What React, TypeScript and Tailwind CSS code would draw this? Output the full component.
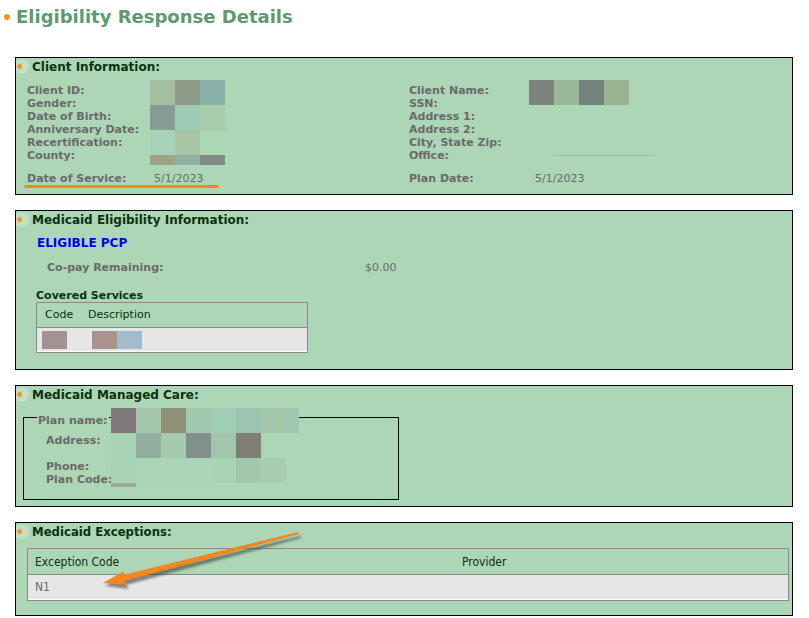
import React from 'react';

const PANEL = 'relative overflow-hidden border border-black bg-[#acd6b6]';

// Greyed-out (redacted) values are rendered as rows of 25px tiles
function Tiles({ rows }: { rows: { h?: number; cells: { c: string; w?: number }[] }[] }) {
  return (
    <div className="flex flex-col">
      {rows.map((r, i) => (
        <div key={i} className="flex">
          {r.cells.map((cell, j) => (
            <div key={j} style={{ background: cell.c, width: cell.w ?? 25, height: r.h ?? 25 }} />
          ))}
        </div>
      ))}
    </div>
  );
}

function PanelTitle({ children, condensed }: { children: React.ReactNode; condensed?: boolean }) {
  return (
    <>
      <span className="absolute left-[-2px] top-[1px] h-[15px] w-[15px] rounded-full bg-white/25" />
      <span className="absolute left-[1px] top-[6px] h-[5px] w-[5px] rounded-full bg-[#f7941d]" />
      <div
        className={
          'pl-[16px] pt-[1px] h-[18px] font-bold leading-[16px] text-[#0a330f] ' +
          (condensed ? "text-[13px] font-['DejaVu_Sans_Condensed',sans-serif]" : 'text-[12px]')
        }
      >
        {children}
      </div>
    </>
  );
}

const label = 'text-[11px] font-bold leading-[13px] text-[#6a6a6a] whitespace-nowrap';

function ClientInfo() {
  return (
    <div className={PANEL + ' h-[138px]'}>
      <PanelTitle>Client Information:</PanelTitle>
      <div className="flex pt-[8px]">
        <div className="flex w-[393px] pl-[11px]">
          <div className={label + ' w-[123px]'}>
            <div>Client ID:</div>
            <div>Gender:</div>
            <div>Date of Birth:</div>
            <div>Anniversary Date:</div>
            <div>Recertification:</div>
            <div>County:</div>
          </div>
          <div className="-mt-[4px]">
            <Tiles
              rows={[
                { cells: [{ c: '#a3bea0' }, { c: '#8d9c88' }, { c: '#89b1aa' }] },
                { cells: [{ c: '#869c94' }, { c: '#9ecdb5' }, { c: '#a8ccaa' }] },
                { cells: [{ c: '#a8d2b8' }, { c: '#a6c6a6' }, { c: '#acd7b5' }] },
                { h: 10, cells: [{ c: '#9da384' }, { c: '#8fb1a0' }, { c: '#7f8a86' }] },
              ]}
            />
          </div>
        </div>
        <div className="flex">
          <div className={label + ' w-[120px]'}>
            <div>Client Name:</div>
            <div>SSN:</div>
            <div>Address 1:</div>
            <div>Address 2:</div>
            <div>City, State Zip:</div>
            <div>Office:</div>
          </div>
          <div className="-mt-[4px] relative">
            <Tiles rows={[{ cells: [{ c: '#7a857c' }, { c: '#9ab797' }, { c: '#748379' }, { c: '#9ab493' }] }]} />
            <div className="mt-[50px] ml-[25px] h-px w-[100px] bg-[#9cc4a4]" />
          </div>
        </div>
      </div>
      <div className="mt-[7px] flex text-[11px] leading-[13px]">
        <div className="flex w-[393px] pl-[11px]">
          <div className={label + ' w-[127px]'}>Date of Service:</div>
          <div className="text-[#6a6a6a]">5/1/2023</div>
        </div>
        <div className="flex">
          <div className={label + ' w-[126px]'}>Plan Date:</div>
          <div className="text-[#6a6a6a]">5/1/2023</div>
        </div>
      </div>
      {/* highlight stroke under the service date */}
      <div className="absolute left-[8px] top-[127px] h-[3px] w-[195px] rounded-full bg-[#f7861b]" />
    </div>
  );
}

function EligibilityInfo() {
  return (
    <div className={PANEL + ' h-[160px]'}>
      <PanelTitle>Medicaid Eligibility Information:</PanelTitle>
      <div className="pl-[21px] pt-[7px] text-[12px] font-bold leading-[14px] text-[#0000f0]">ELIGIBLE PCP</div>
      <div className="mt-[11px] flex pl-[31px] text-[11px] leading-[13px]">
        <div className={label + ' w-[318px]'}>Co-pay Remaining:</div>
        <div className="text-[#6a6a6a]">$0.00</div>
      </div>
      <div className="mt-[15px] pl-[20px] text-[11px] font-bold leading-[13px] text-[#0a330f]">Covered Services</div>
      <div className="ml-[20px] w-[272px] border border-[#8a8a8a]">
        <div className="flex h-[25px] items-center border-b border-[#8a8a8a] pt-[1px] text-[11px] text-[#0a330f]">
          <span className="pl-[8px] w-[51px]">Code</span>
          <span>Description</span>
        </div>
        <div className="flex h-[24px] items-center bg-[#e6e6e6] border-b border-white">
          <div className="ml-[5px] h-[18px] w-[25px] bg-[#a39390]" />
          <div className="ml-[25px] h-[18px] w-[25px] bg-[#a9948c]" />
          <div className="h-[18px] w-[25px] bg-[#a3bccd]" />
        </div>
      </div>
    </div>
  );
}

function ManagedCare() {
  return (
    <div className={PANEL + ' h-[122px]'}>
      <PanelTitle>Medicaid Managed Care:</PanelTitle>
      {/* plan box: the legend row straddles the top border */}
      <div className="ml-[7px] mt-[13px] h-[83px] w-[376px] border border-black">
        <div className="-mt-[10px] flex">
          <div className={label + ' w-[87px] shrink-0'}>
            <div className="ml-[13px] mt-[6px] w-fit bg-[#acd6b6] px-[1px]">Plan name:</div>
            <div className="mt-[7px] pl-[22px]">Address:</div>
            <div className="mt-[13px] pl-[22px]">Phone:</div>
            <div className="pl-[22px]">Plan Code:</div>
          </div>
          <Tiles
            rows={[
              {
                cells: [
                  { c: '#80797a' }, { c: '#a4c6ad' }, { c: '#8f9278' }, { c: '#a1c9b0' },
                  { c: '#a0cdb5' }, { c: '#9bc4b1' }, { c: '#a3c6a8' }, { c: '#9dc7b1', w: 13 },
                ],
              },
              {
                cells: [
                  { c: '#a9d3b6' }, { c: '#92aea1' }, { c: '#a4c9ae' }, { c: '#7f918a' },
                  { c: '#a1c6ab' }, { c: '#807f74' },
                ],
              },
              {
                cells: [
                  { c: '#a6d2b5' }, { c: '#a9d4b6' }, { c: '#a9d4b6' }, { c: '#a9d4b6' },
                  { c: '#a8d3b5' }, { c: '#a1c8ac' }, { c: '#a6cdb1' },
                ],
              },
              { h: 4, cells: [{ c: '#9aa98f' }] },
            ]}
          />
        </div>
      </div>
    </div>
  );
}

function Exceptions() {
  return (
    <div className={PANEL + ' h-[94px]'}>
      <PanelTitle condensed>Medicaid Exceptions:</PanelTitle>
      <div className="ml-[11px] mt-[7px] w-[762px] border border-[#8a8a8a] font-['DejaVu_Sans_Condensed',sans-serif] text-[12px]">
        <div className="flex h-[26px] items-center border-b border-[#8a8a8a] pt-[1px] text-[#0a330f]">
          <span className="pl-[7px] w-[434px]">Exception Code</span>
          <span>Provider</span>
        </div>
        <div className="flex h-[25px] items-center bg-[#e6e6e6] border-b border-white pl-[7px] text-[#6a6a6a]">N1</div>
      </div>
      {/* pointer arrow */}
      <svg className="absolute left-0 top-0" width="778" height="94" viewBox="0 0 778 94">
        <defs>
          <filter id="sh" x="-20%" y="-50%" width="140%" height="200%">
            <feGaussianBlur stdDeviation="1.2" />
          </filter>
        </defs>
        <g transform="translate(2,3)" filter="url(#sh)" opacity="0.55">
          <polygon points="282,10 107,53 108,49 87,60 111,63 108,59 283,12" fill="#333" />
        </g>
        <polygon points="282,9 107,52 108,48 87,60 111,62 108,58 283,11" fill="#f7861b" />
      </svg>
    </div>
  );
}

export default function App() {
  return (
    <div className="w-[809px] h-[618px] bg-white font-['DejaVu_Sans',sans-serif]">
      <div className="flex h-[57px] items-start pl-[4px] pt-[5px]">
        <span className="mt-[9px] h-[6px] w-[6px] rounded-full bg-[#f7941d]" />
        <h1 className="ml-[6px] text-[18px] font-bold leading-[24px] text-[#5d9a6c]">Eligibility Response Details</h1>
      </div>
      <div className="flex w-[793px] flex-col gap-[15px] pl-[15px]">
        <ClientInfo />
        <EligibilityInfo />
        <ManagedCare />
        <Exceptions />
      </div>
    </div>
  );
}
